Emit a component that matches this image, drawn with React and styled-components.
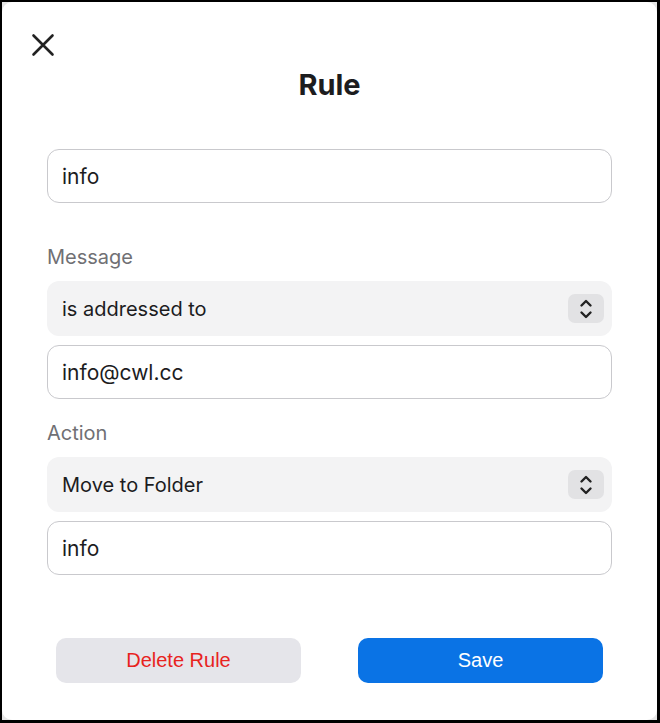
import React from "react";
import styled, { createGlobalStyle } from "styled-components";

const GlobalStyle = createGlobalStyle`
  html, body {
    margin: 0;
    padding: 0;
    background: #000;
  }
  body {
    font-family: Inter, "Noto Sans", sans-serif;
    color: #1c1c1e;
  }
`;

const CloseIcon = () => (
  <svg width="24" height="24" viewBox="0 0 24 24" fill="none">
    <path
      d="M2.5 2.5 L21.5 21.5 M21.5 2.5 L2.5 21.5"
      stroke="#222"
      strokeWidth="2.6"
      strokeLinecap="round"
    />
  </svg>
);

const StepperIcon = () => (
  <svg width="14" height="22" viewBox="0 0 14 22" fill="none">
    <path
      d="M2.5 7.5 L7 3 L11.5 7.5 M2.5 14.5 L7 19 L11.5 14.5"
      stroke="#222"
      strokeWidth="2.4"
      strokeLinecap="round"
      strokeLinejoin="round"
    />
  </svg>
);

const Field = ({ value }) => <Input defaultValue={value} />;

const Picker = ({ value }) => (
  <Select>
    <SelectText>{value}</SelectText>
    <Stepper>
      <StepperIcon />
    </Stepper>
  </Select>
);

const App = () => {
  return (
    <>
      <GlobalStyle />
      <Frame>
        <Backdrop>
          <Panel>
            <Header>
              <CloseButton aria-label="Close">
                <CloseIcon />
              </CloseButton>
              <Title>Rule</Title>
            </Header>

            <Form>
              <Field value="info" />

              <Section $top={42}>
                <Label>Message</Label>
                <Picker value="is addressed to" />
                <Field value="info@cwl.cc" />
              </Section>

              <Section $top={22}>
                <Label>Action</Label>
                <Picker value="Move to Folder" />
                <Field value="info" />
              </Section>
            </Form>

            <Actions>
              <Button $variant="danger">Delete Rule</Button>
              <Button $variant="primary">Save</Button>
            </Actions>
          </Panel>
        </Backdrop>
      </Frame>
    </>
  );
};

const Frame = styled.div`
  width: 660px;
  height: 723px;
  box-sizing: border-box;
  padding: 2px 3px 3px 2px;
  background: #000;
`;

const Backdrop = styled.div`
  height: 100%;
  background: #e6e6e6;
`;

const Panel = styled.div`
  height: 100%;
  box-sizing: border-box;
  background: #fff;
  border-radius: 10px;
  display: flex;
  flex-direction: column;
`;

const Header = styled.div`
  display: flex;
  flex-direction: column;
  padding: 31px 0 0 29px;
`;

const CloseButton = styled.button`
  width: 24px;
  height: 24px;
  padding: 0;
  border: none;
  background: none;
  display: flex;
  cursor: pointer;
`;

const Title = styled.h1`
  margin: 10px 0 0 -29px;
  text-align: center;
  font-size: 29px;
  line-height: 36px;
  font-weight: 700;
  color: #1c1c1e;
`;

const Form = styled.div`
  display: flex;
  flex-direction: column;
  padding: 0 45px;
  margin-top: 46px;
`;

const Section = styled.div`
  display: flex;
  flex-direction: column;
  gap: 9px;
  margin-top: ${(p) => p.$top}px;
`;

const Label = styled.div`
  font-size: 20px;
  line-height: 24px;
  color: #707074;
  margin-bottom: 3px;
`;

const Input = styled.input`
  box-sizing: border-box;
  height: 54px;
  width: 100%;
  padding: 0 14px;
  border: 1px solid #c9c9cd;
  border-radius: 12px;
  font-family: inherit;
  font-size: 21px;
  color: #1c1c1e;
  background: #fff;
  outline: none;
`;

const Select = styled.div`
  height: 55px;
  box-sizing: border-box;
  display: flex;
  align-items: center;
  justify-content: space-between;
  padding: 0 8px 0 15px;
  border-radius: 12px;
  background: #f3f3f4;
`;

const SelectText = styled.span`
  font-size: 20px;
  color: #1c1c1e;
`;

const Stepper = styled.span`
  width: 36px;
  height: 29px;
  border-radius: 7px;
  background: #e2e2e4;
  display: flex;
  align-items: center;
  justify-content: center;
`;

const Actions = styled.div`
  display: flex;
  gap: 57px;
  padding: 0 54px;
  margin-top: 63px;
`;

const Button = styled.button`
  flex: 1;
  height: 45px;
  border: none;
  border-radius: 10px;
  font-family: "Liberation Sans", Arial, sans-serif;
  font-size: 20px;
  cursor: pointer;
  background: ${(p) => (p.$variant === "primary" ? "#0a73e5" : "#e5e5ea")};
  color: ${(p) => (p.$variant === "primary" ? "#fff" : "#e8231e")};
`;

export default App;
